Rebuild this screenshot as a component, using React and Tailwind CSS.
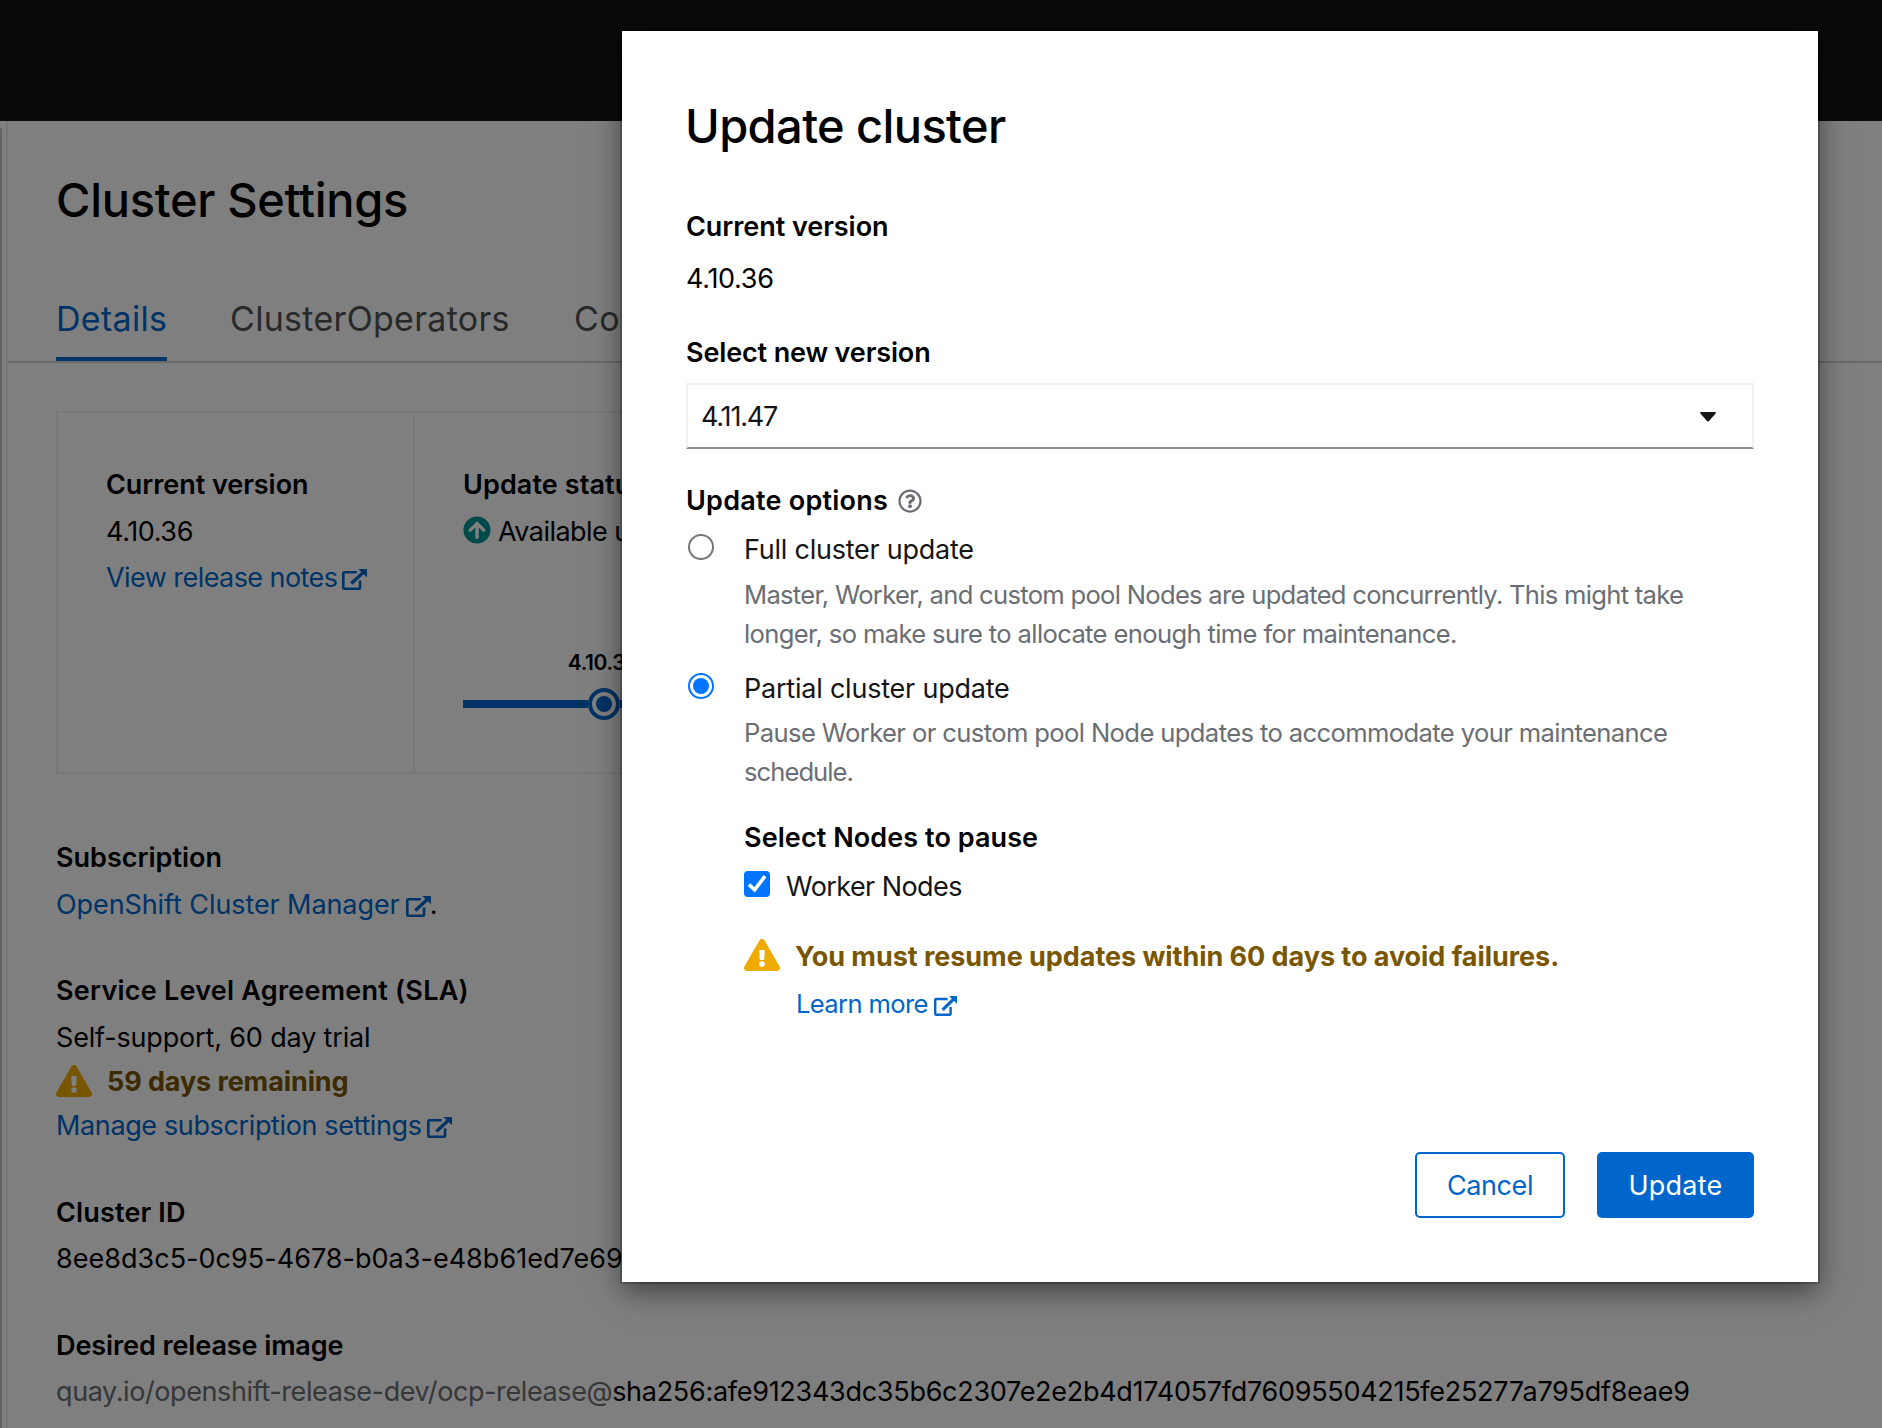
import React from 'react';
import { FaExclamationTriangle, FaArrowCircleUp, FaRegQuestionCircle } from 'react-icons/fa';

function ExternalIcon({ className }) {
  return (
    <svg viewBox="0 0 23 20" preserveAspectRatio="none" className={className} fill="none" stroke="currentColor">
      <path d="M13.6 3H2.2Q1.2 3 1.2 4V17.8Q1.2 18.8 2.2 18.8H15.6Q16.6 18.8 16.6 17.8V11" strokeWidth="2.4" />
      <path d="M8.6 13.8L19.6 3.2" strokeWidth="3.2" />
      <path d="M15 0H23V7.8Z" fill="currentColor" stroke="none" />
    </svg>
  );
}

function Label({ className = '', children }) {
  return <div className={`font-semibold h-[46px] pt-[2px] leading-[44px] whitespace-nowrap ${className}`}>{children}</div>;
}

function Line({ className = '', children }) {
  return <div className={`flex items-center h-[46px] pt-[2px] leading-[44px] whitespace-nowrap ${className}`}>{children}</div>;
}

function ClusterPage() {
  return (
    <div className="flex flex-col w-full h-full">
      <header className="h-[121px] shrink-0 bg-[#151515]" />
      <div className="flex flex-1 min-h-0">
        <aside className="flex w-2 shrink-0 bg-white">
          <div className="mt-[7px] w-[2px] rounded-tr-full bg-[#c4c4c4]" />
          <div className="ml-auto w-[2px] bg-[#ececec]" />
        </aside>
        <main className="flex-1 min-w-0 bg-white text-black">
          <h1 className="mt-[51px] ml-12 h-14 leading-14 text-[47px] font-medium tracking-[-0.31px]">Cluster Settings</h1>
          <nav className="mt-[47px] pl-12 flex border-b-2 border-[#d2d2d2] text-[34px] text-[#4f5255] tracking-[0.3px] whitespace-nowrap overflow-hidden">
            <div className="w-[111px] h-[86px] pt-1 leading-[80px] border-b-4 border-[#0066cc] text-[#0066cc]">Details</div>
            <div className="ml-[63px] w-[281px] pt-1 leading-[80px]">ClusterOperators</div>
            <div className="ml-[63px] pt-1 leading-[80px]">Configuration</div>
          </nav>

          <section className="mt-12 ml-12 w-[1700px] h-[363px] flex border-2 border-[#f0f0f0]">
            <div className="w-[357px] shrink-0 border-r-2 border-[#f0f0f0] pt-12 pl-12">
              <Label className="mb-px tracking-[-0.05px]">Current version</Label>
              <Line className="tracking-[-0.4px]">4.10.36</Line>
              <Line className="text-[#0066cc] tracking-[-0.56px]">
                View release notes
                <ExternalIcon className="ml-[5px] mt-[3px] w-[25px] h-[21px]" />
              </Line>
            </div>
            <div className="flex-1 pt-12 pl-12">
              <Label className="mb-px tracking-[0.1px]">Update status</Label>
              <Line className="tracking-[-0.54px]">
                <FaArrowCircleUp className="size-[28px] -mt-1 mr-[7px] text-[#009596]" />
                Available updates
              </Line>
              <div className="mt-[94px] ml-[90px] w-[100px] h-[30px] leading-[30px] text-center text-[21px] font-semibold tracking-[-0.4px]">4.10.36</div>
              <div className="mt-[10px] flex items-center">
                <div className="w-[125px] h-2 bg-[#0066cc]" />
                <div className="size-8 rounded-full border-4 border-[#0066cc] flex items-center justify-center">
                  <div className="size-4 rounded-full bg-[#0066cc]" />
                </div>
                <div className="w-[420px] h-2 bg-[#0066cc]" />
              </div>
            </div>
          </section>

          <dl className="mt-[60px] ml-12">
            <Label className="mb-px">Subscription</Label>
            <Line>
              <span className="text-[#0066cc] tracking-[-0.09px]">OpenShift Cluster Manager</span>
              <ExternalIcon className="ml-[6px] mt-[3px] w-[25px] h-[21px] text-[#0066cc]" />
              <span className="-ml-px">.</span>
            </Line>
            <Label className="mt-10 mb-px tracking-[0.24px]">Service Level Agreement (SLA)</Label>
            <Line className="tracking-[-0.16px]">Self-support, 60 day trial</Line>
            <div className="flex items-center h-[43px] leading-[43px] font-bold tracking-[-0.1px] text-[#795600]">
              <FaExclamationTriangle className="w-9 h-8 -mt-[2px] mr-[15px] text-[#f0ab00]" />
              59 days remaining
            </div>
            <div className="flex items-center h-11 pt-[2px] leading-[42px] text-[#0066cc] tracking-[-0.37px]">
              Manage subscription settings
              <ExternalIcon className="ml-[5px] mt-[3px] w-[25px] h-[21px]" />
            </div>
            <Label className="mt-[42px] tracking-[0.16px]">Cluster ID</Label>
            <Line className="tracking-[0.02px]">8ee8d3c5-0c95-4678-b0a3-e48b61ed7e69</Line>
            <Label className="mt-[41px] tracking-[-0.09px]">Desired release image</Label>
            <Line>
              <span className="text-[#6a6e73] tracking-[-0.4px]">quay.io/openshift-release-dev/ocp-release@</span>
              <span className="tracking-[-0.284px]">sha256:afe912343dc35b6c2307e2e2b4d174057fd76095504215fe25277a795df8eae9</span>
            </Line>
          </dl>
        </main>
      </div>
    </div>
  );
}

function UpdateModal() {
  return (
    <div className="absolute left-[622px] top-[31px] w-[1196px] h-[1251px] px-16 flex flex-col bg-white text-[#151515] shadow-[0_0_0_2px_rgba(0,0,0,0.2),0_9px_27px_rgba(0,0,0,0.5)]">
      <h2 className="mt-[67px] -ml-px h-14 leading-14 text-[47px] font-medium tracking-[-0.61px] text-black">Update cluster</h2>
      <Label className="mt-[49px] text-black tracking-[-0.05px]">Current version</Label>
      <Line className="mt-[6px] text-black tracking-[-0.3px]">4.10.36</Line>
      <Label className="mt-7 text-black tracking-[-0.14px]">Select new version</Label>
      <div className="mt-2 h-[66px] shrink-0 flex items-center justify-between border-2 border-[#f0f0f0] border-b-[#8a8d90] pt-[2px] pl-[13px] pr-9">
        <span className="tracking-[-1.19px]">4.11.47</span>
        <svg viewBox="0 0 16 10" className="w-4 h-[10px]" fill="#151515"><path d="M0.8 0H15.2Q16.4 0.6 15.4 1.7L8.8 9.2Q8 10 7.2 9.2L0.6 1.7Q-0.4 0.6 0.8 0Z" /></svg>
      </div>
      <div className="mt-7 h-[46px] flex items-center text-black">
        <Label className="tracking-[0.23px]">Update options</Label>
        <FaRegQuestionCircle className="ml-[10px] mt-[2px] size-6 text-[#6a6e73]" />
      </div>

      <div className="mt-[3px] flex">
        <div className="ml-[2px] mt-2 size-[26px] shrink-0 rounded-full border-2 border-[#767676]" />
        <div className="ml-[30px]">
          <Line className="tracking-[-0.24px]">Full cluster update</Line>
          <p className="mt-1 text-[25.6px] leading-[38.6px] text-[#6a6e73] whitespace-nowrap tracking-[-0.71px]">
            Master, Worker, and custom pool Nodes are updated concurrently. This might take<br />
            <span className="tracking-[-0.64px]">longer, so make sure to allocate enough time for maintenance.</span>
          </p>
        </div>
      </div>

      <div className="mt-[12px] flex">
        <div className="ml-[2px] mt-2 size-[26px] shrink-0 rounded-full border-2 border-[#0075ff] flex items-center justify-center">
          <div className="size-4 rounded-full bg-[#0075ff]" />
        </div>
        <div className="ml-[30px] flex-1">
          <Line className="tracking-[-0.22px]">Partial cluster update</Line>
          <p className="mt-[3px] text-[25.6px] leading-[38.6px] text-[#6a6e73] whitespace-nowrap tracking-[-0.62px]">
            Pause Worker or custom pool Node updates to accommodate your maintenance<br />
            <span className="tracking-[-0.95px]">schedule.</span>
          </p>
          <Label className="mt-[23px] text-black tracking-[0.08px]">Select Nodes to pause</Label>
          <div className="mt-[3px] flex tracking-[-0.57px]">
            <div className="mt-2 mr-4 size-[26px] shrink-0 rounded-[4px] bg-[#0075ff] flex items-center justify-center">
              <svg viewBox="0 0 26 26" className="size-[26px]" fill="none" stroke="white" strokeWidth="3.6"><path d="M5 13.6L10.6 18.8L21 5.2" /></svg>
            </div>
            <Line>Worker Nodes</Line>
          </div>
          <Line className="mt-6 font-bold text-[#795600] tracking-[-0.05px]">
            <FaExclamationTriangle className="w-9 h-8 -mt-1 mr-[15px] text-[#f0ab00]" />
            You must resume updates within 60 days to avoid failures.
          </Line>
          <Line className="mt-px ml-[52px] text-[25.6px] text-[#0066cc] tracking-[-0.65px]">
            Learn more
            <ExternalIcon className="ml-[6px] mt-[3px] w-[23px] h-5" />
          </Line>
        </div>
      </div>

      <div className="mt-auto mb-16 flex justify-end gap-8">
        <button className="w-[150px] h-[66px] pt-[2px] rounded-[5px] border-2 border-[#0066cc] text-[#0066cc] tracking-[-0.4px]">Cancel</button>
        <button className="w-[157px] h-[66px] pt-[2px] rounded-[5px] bg-[#0066cc] text-white tracking-[0.22px]">Update</button>
      </div>
    </div>
  );
}

export default function App() {
  return (
    <div className="relative w-[1882px] h-[1428px] overflow-hidden bg-white font-['Inter',sans-serif] text-[27px]">
      <ClusterPage />
      <div className="absolute inset-0 bg-black/50" />
      <UpdateModal />
    </div>
  );
}
